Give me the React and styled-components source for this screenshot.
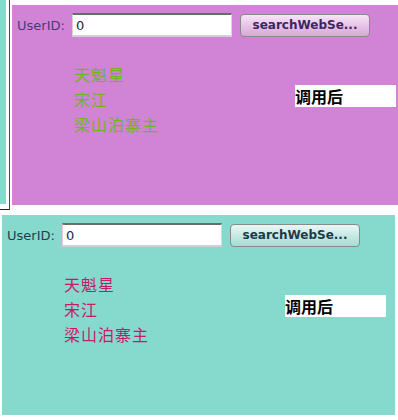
import styled, { createGlobalStyle } from "styled-components";

const GlobalStyle = createGlobalStyle`
  html, body {
    margin: 0;
    padding: 0;
    background: #ffffff;
    font-family: "DejaVu Sans", "Noto Sans CJK SC", sans-serif;
  }
`;

const themes = {
  purple: {
    bg: "#d183d6",
    label: "#4b3a78",
    btnTop: "#f6e4f6",
    btnBottom: "#d9a6da",
    btnText: "#3b2760",
    item: "#72b31e",
  },
  teal: {
    bg: "#85dacd",
    label: "#1f3f4f",
    btnTop: "#e8f7f5",
    btnBottom: "#a6dcd4",
    btnText: "#1c3a48",
    item: "#c41a6a",
  },
};

const names = ["天魁星", "宋江", "梁山泊寨主"];

const Panel = ({ tone }) => {
  const t = themes[tone];
  return (
    <Window bg={t.bg}>
      <Toolbar>
        <Label color={t.label}>UserID:</Label>
        <Input type="text" defaultValue="0" />
        <Button top={t.btnTop} bottom={t.btnBottom} color={t.btnText}>
          searchWebSe...
        </Button>
      </Toolbar>
      <Body>
        <List>
          {names.map((n) => (
            <Item key={n} color={t.item}>
              {n}
            </Item>
          ))}
        </List>
        <Result>调用后</Result>
      </Body>
    </Window>
  );
};

const App = () => {
  return (
    <>
      <GlobalStyle />
      <Page>
        <TopRow>
          <Sliver>
            <Strip />
          </Sliver>
          <TopSlot>
            <Panel tone="purple" />
          </TopSlot>
        </TopRow>
        <BottomSlot>
          <Panel tone="teal" />
        </BottomSlot>
      </Page>
    </>
  );
};

export default App;

// styled-components
const Page = styled.div`
  width: 398px;
  height: 420px;
  overflow: hidden;
`;
const TopRow = styled.div`
  display: flex;
  height: 210px;
`;
const Sliver = styled.div`
  width: 9px;
  height: 209px;
  border-right: 1px solid #d0101c;
  border-bottom: 1px solid #222;
  margin-right: 2px;
`;
const Strip = styled.div`
  width: 6px;
  height: 204px;
  background: #85dacd;
`;
const TopSlot = styled.div`
  flex: 1;
  padding-top: 5px;
  height: 200px;
`;
const BottomSlot = styled.div`
  margin: 5px 0 0 2px;
  width: 393px;
  height: 200px;
`;
const Window = styled.div`
  background: ${(p) => p.bg};
  height: 200px;
  width: 100%;
`;
const Toolbar = styled.div`
  display: flex;
  align-items: center;
  padding: 8px 0 0 5px;
  height: 24px;
`;
const Label = styled.span`
  font-size: 13px;
  color: ${(p) => p.color};
  width: 55px;
`;
const Input = styled.input`
  box-sizing: border-box;
  width: 160px;
  height: 24px;
  margin: 0;
  padding: 0 0 0 3px;
  border-top: 2px solid #6b6b6b;
  border-left: 1px solid #e2c8d8;
  border-right: 1px solid #d8d8d8;
  border-bottom: 2px solid #d0d0d0;
  background: #fff;
  font-family: "DejaVu Sans", sans-serif;
  font-size: 13px;
  color: #1a2a40;
  outline: none;
`;
const Button = styled.button`
  box-sizing: border-box;
  margin-left: 8px;
  width: 130px;
  height: 23px;
  padding: 0;
  border: 1px solid #8a8a8a;
  border-radius: 4px;
  background: linear-gradient(${(p) => p.top}, ${(p) => p.bottom});
  font-family: "DejaVu Sans", sans-serif;
  font-weight: bold;
  font-size: 12px;
  color: ${(p) => p.color};
  cursor: pointer;
`;
const Body = styled.div`
  display: flex;
  padding: 25px 0 0 62px;
`;
const List = styled.div`
  width: 221px;
  display: flex;
  flex-direction: column;
`;
const Item = styled.div`
  font-family: "Noto Sans CJK SC", sans-serif;
  font-size: 16px;
  line-height: 25px;
  letter-spacing: 1px;
  color: ${(p) => p.color};
`;
const Result = styled.div`
  margin-top: 23px;
  width: 101px;
  height: 22px;
  background: #fff;
  font-family: "Noto Sans CJK SC", sans-serif;
  font-weight: bold;
  font-size: 16px;
  line-height: 22px;
  color: #000;
`;
